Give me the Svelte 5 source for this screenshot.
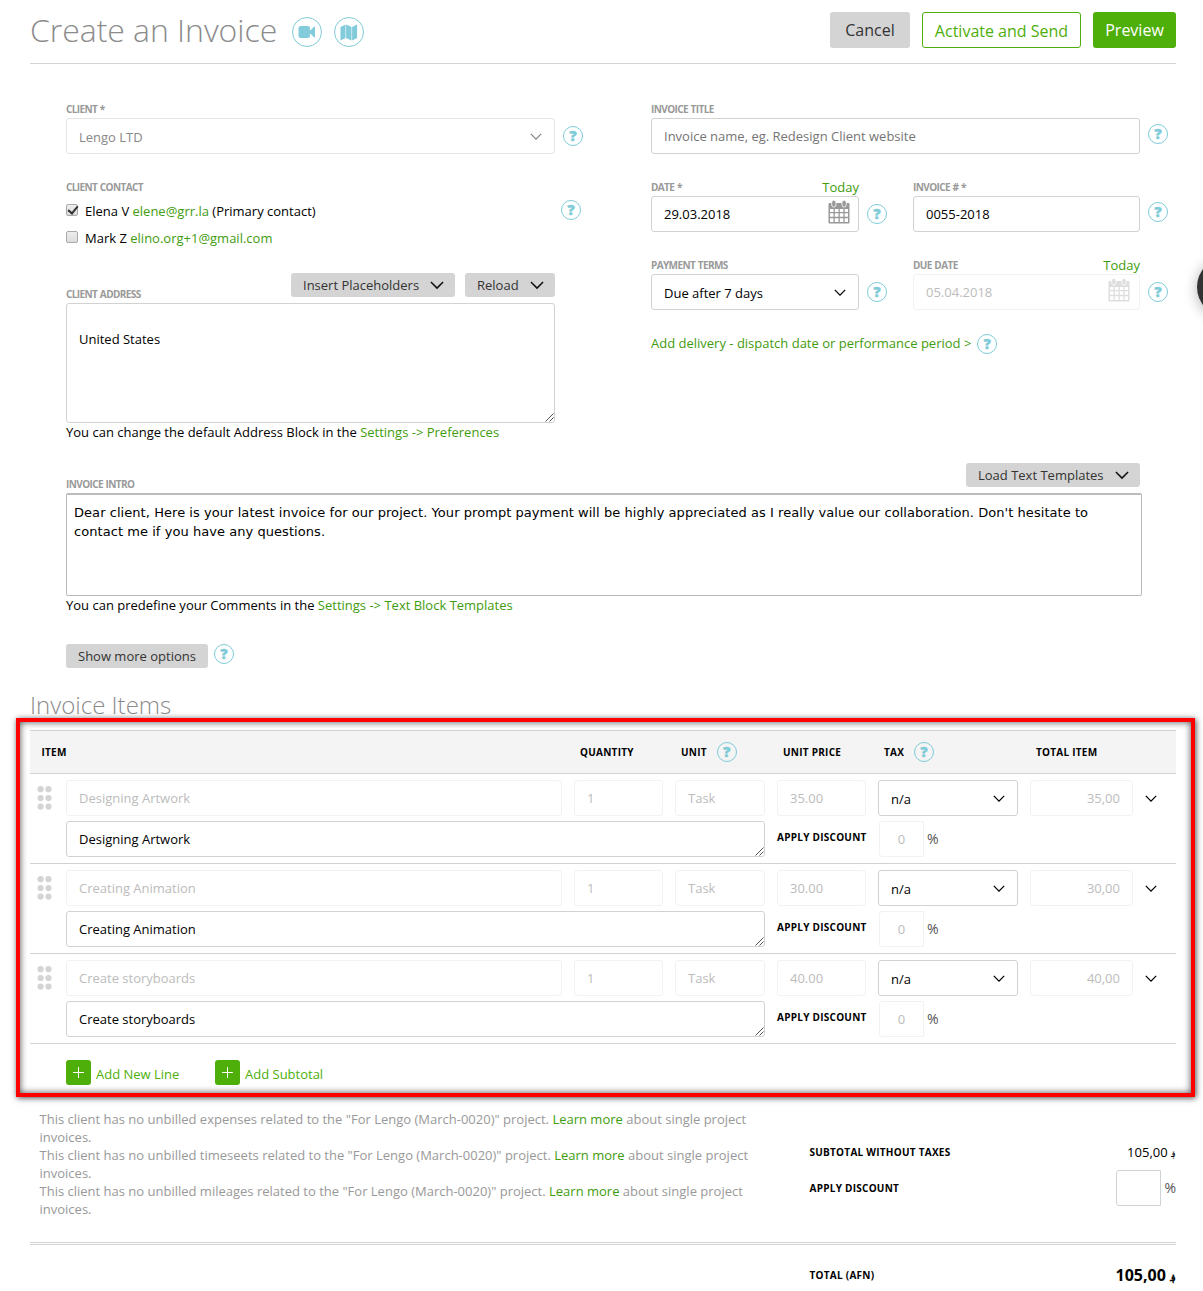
<script>
	let contacts = $state([
		{ name: 'Elena V', email: 'elene@grr.la', note: '(Primary contact)', checked: true },
		{ name: 'Mark Z', email: 'elino.org+1@gmail.com', note: '', checked: false }
	]);

	const items = [
		{ name: 'Designing Artwork', quantity: '1', unit: 'Task', price: '35.00', total: '35,00' },
		{ name: 'Creating Animation', quantity: '1', unit: 'Task', price: '30.00', total: '30,00' },
		{ name: 'Create storyboards', quantity: '1', unit: 'Task', price: '40.00', total: '40,00' }
	];

	const unbilled = ['expenses', 'timeseets', 'mileages'];
	const intro =
		"Dear client, Here is your latest invoice for our project. Your prompt payment will be highly appreciated as I really value our collaboration. Don't hesitate to contact me if you have any questions.";
</script>

{#snippet help()}
	<span class="help">?</span>
{/snippet}

{#snippet chevron(size = 12)}
	<svg class="chevron" width={size} height={size * 0.6} viewBox="0 0 12 7">
		<path d="M0.8 0.8 6 6 11.2 0.8" fill="none" stroke="currentColor" stroke-width="1.3" />
	</svg>
{/snippet}

{#snippet calendar()}
	<svg class="calendar" width="22" height="24" viewBox="0 0 22 24">
		<path
			fill-rule="evenodd"
			fill="currentColor"
			d="M1.500 3h19q1 0 1 1v18.500q0 1-1 1h-19q-1 0-1-1V4q0-1 1-1zM2 9v3h3.500V9zM6.800 9v3h3.700V9zM11.800 9v3h3.600V9zM16.700 9v3H20V9zM2 13.300v3.500h3.500v-3.500zM6.800 13.300v3.500h3.700v-3.500zM11.800 13.300v3.500h3.600v-3.500zM16.700 13.300v3.500H20v-3.500zM2 18.200V22h3.500v-3.800zM6.800 18.200V22h3.700v-3.800zM11.800 18.200V22h3.600v-3.800zM16.700 18.200V22H20v-3.800z"
		/>
		<rect x="3.700" y="0.300" width="4.200" height="6.700" rx="2" fill="currentColor" stroke="#fff" stroke-width="0.800" />
		<rect x="14" y="0.300" width="4.200" height="6.700" rx="2" fill="currentColor" stroke="#fff" stroke-width="0.800" />
	</svg>
{/snippet}

{#snippet grip()}
	<svg class="resize" width="9" height="9" viewBox="0 0 9 9">
		<path d="M0.500 8.500 8.500 0.500M4.500 8.500 8.500 4.500" stroke="#555" stroke-width="1" />
	</svg>
{/snippet}

<div class="page">
	<header>
		<h1>Create an Invoice</h1>
		<span class="round">
			<svg width="18" height="14" viewBox="0 0 18 14">
				<rect x="0.500" y="1" width="11.500" height="12" rx="2.200" fill="currentColor" />
				<path d="M11.500 6.200 16 1.700q1-.6 1 .4v9.800q0 1-1 .4L11.500 7.800z" fill="currentColor" />
			</svg>
		</span>
		<span class="round">
			<svg width="18" height="17" viewBox="0 0 18 17">
				<path d="M0.500 3 5.500 0.500V14L0.500 16.500zM6.100 0.500 11.500 3V16.500L6.100 14zM12.100 3 17.100 0.500V14L12.100 16.500z" fill="currentColor" />
			</svg>
		</span>
		<div class="actions">
			<button class="btn grey">Cancel</button>
			<button class="btn outline">Activate and Send</button>
			<button class="btn green">Preview</button>
		</div>
	</header>

	<div class="columns">
		<section class="left">
			<div class="label">Client *</div>
			<div class="line client">
				<div class="field muted">Lengo LTD {@render chevron()}</div>
				{@render help()}
			</div>

			<div class="label">Client contact</div>
			<div class="contacts">
				<div class="contact-list">
					{#each contacts as contact}
						<label class="contact">
							<input type="checkbox" bind:checked={contact.checked} />
							<span>{contact.name} <a href="#top">{contact.email}</a> {contact.note}</span>
						</label>
					{/each}
				</div>
				{@render help()}
			</div>

			<div class="label-row address-row">
				<div class="label">Client address</div>
				<button class="small placeholders">Insert Placeholders {@render chevron(14)}</button>
				<button class="small reload">Reload {@render chevron(14)}</button>
			</div>
			<div class="address">United States {@render grip()}</div>
			<p class="hint">You can change the default Address Block in the <a href="#top">Settings -&gt; Preferences</a></p>
		</section>

		<section class="right">
			<div class="label">Invoice title</div>
			<div class="line">
				<div class="field placeholder">Invoice name, eg. Redesign Client website</div>
				{@render help()}
			</div>

			<div class="pair">
				<div class="first">
					<div class="label-row"><div class="label">Date *</div><a href="#top">Today</a></div>
					<div class="line low">
						<div class="field">29.03.2018 {@render calendar()}</div>
						{@render help()}
					</div>
				</div>
				<div class="second">
					<div class="label">Invoice # *</div>
					<div class="line">
						<div class="field">0055-2018</div>
						{@render help()}
					</div>
				</div>
			</div>

			<div class="pair">
				<div class="first">
					<div class="label">Payment terms</div>
					<div class="line low">
						<div class="field select">Due after 7 days {@render chevron()}</div>
						{@render help()}
					</div>
				</div>
				<div class="second">
					<div class="label-row"><div class="label">Due date</div><a href="#top">Today</a></div>
					<div class="line low">
						<div class="field disabled">05.04.2018 {@render calendar()}</div>
						{@render help()}
					</div>
				</div>
			</div>
			<div class="delivery">
				<a href="#top">Add delivery - dispatch date or performance period &gt;</a>
				{@render help()}
			</div>
		</section>
	</div>

	<section class="intro">
		<div class="label-row">
			<div class="label">Invoice intro</div>
			<button class="small templates">Load Text Templates {@render chevron(14)}</button>
		</div>
		<div class="editor">{intro}</div>
		<p class="hint">You can predefine your Comments in the <a href="#top">Settings -&gt; Text Block Templates</a></p>
		<div class="more">
			<button class="small">Show more options</button>
			{@render help()}
		</div>
	</section>

	<h2>Invoice Items</h2>

	<section class="items">
		<div class="highlight"></div>
		<div class="head">
			<span>Item</span>
			<span>Quantity</span>
			<span>Unit {@render help()}</span>
			<span>Unit price</span>
			<span>Tax {@render help()}</span>
			<span>Total item</span>
		</div>
		{#each items as item}
			<div class="item">
				<svg class="drag" width="15" height="24" viewBox="0 0 15 24">
					{#each [3.2, 12, 20.600] as y}
						<circle cx="3.600" cy={y} r="3.100" />
						<circle cx="11.500" cy={y} r="3.100" />
					{/each}
				</svg>
				<div class="cells">
					<div class="field disabled">{item.name}</div>
					<div class="field disabled">{item.quantity}</div>
					<div class="field disabled">{item.unit}</div>
					<div class="field disabled">{item.price}</div>
					<div class="field select">n/a {@render chevron()}</div>
					<div class="field disabled total">{item.total}</div>
					{@render chevron()}
				</div>
				<div class="details">
					<div class="field description">{item.name} {@render grip()}</div>
					<span class="caption">Apply discount</span>
					<div class="field disabled percent">0</div>
					<span class="sign">%</span>
				</div>
			</div>
		{/each}
		<div class="add">
			<button class="add-line"><span class="plus"></span> Add New Line</button>
			<button class="add-line"><span class="plus"></span> Add Subtotal</button>
		</div>
	</section>

	<div class="summary">
		<div class="notes">
			{#each unbilled as kind}
				<p>
					This client has no unbilled {kind} related to the "For Lengo (March-0020)" project.
					<a href="#top">Learn more</a> about single project invoices.
				</p>
			{/each}
		</div>
		<div class="sums">
			<div class="sum">
				<span class="caption">Subtotal without taxes</span>
				<span class="amount">105,00 <i>؋</i></span>
			</div>
			<div class="sum discount">
				<span class="caption">Apply discount</span>
				<div class="field percent"></div>
				<span class="sign">%</span>
			</div>
		</div>
	</div>

	<div class="grand">
		<span class="caption">Total (AFN)</span>
		<strong>105,00 <i>؋</i></strong>
	</div>
</div>

<div class="bubble"></div>

<style>
	:global(html) {
		overflow: hidden;
	}

	:global(body) {
		background: #fff;
	}

	* {
		box-sizing: border-box;
	}

	.page {
		width: 1203px;
		height: 1291px;
		padding: 0 27px 0 30px;
		font-family: 'Open Sans', sans-serif;
		font-size: 13px;
		line-height: 18px;
		color: #000;
	}

	a {
		color: #3f9c0e;
		text-decoration: none;
	}

	p {
		margin: 0;
	}

	button {
		border: 0;
		padding: 0;
		font-family: inherit;
		border-radius: 3px;
	}

	header {
		display: flex;
		height: 64px;
		border-bottom: 1px solid #d4d4d4;
	}

	h1 {
		margin: 10px 15px 0 0;
		width: 247px;
		font-size: 32px;
		line-height: 40px;
		font-weight: 300;
		letter-spacing: -0.05px;
		color: #8c8c8c;
		white-space: nowrap;
	}

	.round {
		display: flex;
		align-items: center;
		justify-content: center;
		width: 30px;
		height: 30px;
		margin: 17px 12px 0 0;
		border: 1px solid #7fcbd8;
		border-radius: 50%;
		color: #82cbda;
	}

	.actions {
		display: flex;
		gap: 12px;
		margin: 12px 0 0 auto;
	}

	.btn {
		height: 36px;
		font-size: 16px;
	}

	.grey {
		width: 80px;
		background: #d4d4d4;
		color: #333;
	}

	.outline {
		width: 159px;
		padding-top: 2px;
		background: #fff;
		border: 1px solid #4eaf0a;
		color: #4eaf0a;
	}

	.green {
		width: 83px;
		background: #4eaf0a;
		color: #fff;
	}

	.columns {
		display: flex;
		gap: 68px;
		height: 399px;
		padding: 36px 0 0 36px;
	}

	.left,
	.right {
		flex: none;
		width: 517px;
	}

	.label {
		height: 18px;
		font-size: 10px;
		font-weight: 700;
		letter-spacing: -0.6px;
		line-height: 18px;
		color: #999;
		text-transform: uppercase;
		word-spacing: 0.6px;
	}

	.label-row {
		display: flex;
		justify-content: space-between;
		height: 18px;
	}

	.label-row a {
		line-height: 18px;
	}

	.line {
		display: flex;
		gap: 8px;
		height: 60px;
	}

	.line .help {
		margin-top: 6px;
	}

	.low .help,
	.client .help {
		margin-top: 8px;
	}

	.field {
		display: flex;
		align-items: center;
		justify-content: space-between;
		flex: 1;
		height: 36px;
		padding: 0 12px;
		border: 1px solid #d2d2d2;
		border-radius: 3px;
		background: #fff;
	}

	.muted {
		border-color: #e4e4e4;
		color: #888;
		padding-top: 2px;
	}

	.placeholder {
		color: #757575;
	}

	.select {
		padding-top: 2px;
	}

	.select .chevron,
	.muted .chevron {
		margin-top: -1px;
	}

	.disabled {
		border-color: #f2f2f2;
		color: #bcbcbc;
	}

	.calendar {
		margin: -4px -4px 0 0;
		color: #999;
	}

	.disabled .calendar {
		margin-right: -3px;
		color: #dedede;
	}

	.help {
		display: inline-flex;
		flex: none;
		align-items: center;
		justify-content: center;
		width: 20px;
		height: 20px;
		border: 1px solid #7fcbd8;
		border-radius: 50%;
		font-size: 14px;
		font-weight: 800;
		letter-spacing: 0;
		line-height: 18px;
		color: #7fcbd8;
		-webkit-text-stroke: 0.5px #7fcbd8;
	}

	.contacts {
		display: flex;
		height: 77px;
		justify-content: space-between;
		padding: 3px 2px 0 0;
	}

	.contacts .help {
		margin: 1px 0 0;
	}

	.contact {
		display: flex;
		height: 27px;
		line-height: 24px;
	}

	.contact input {
		appearance: none;
		width: 12px;
		height: 12px;
		margin: 5px 7px 0 0;
		border: 1px solid #aaa;
		border-radius: 2px;
		background: linear-gradient(#eee, #dcdcdc);
	}

	.contact input:checked::after {
		content: '';
		display: block;
		width: 4px;
		height: 8px;
		margin: -1px 0 0 3px;
		border: solid #333;
		border-width: 0 2px 2px 0;
		transform: rotate(40deg);
	}

	.address-row {
		height: 30px;
		gap: 10px;
		width: 489px;
	}

	.address-row .label {
		margin: 12px auto 0 0;
	}

	.small {
		display: flex;
		align-items: center;
		justify-content: space-between;
		height: 24px;
		padding: 0 11px 0 12px;
		background: #d4d4d4;
		font-size: 13px;
		line-height: 18px;
		color: #333;
	}

	.small .chevron {
		margin-top: 1px;
		color: #111;
	}

	.placeholders {
		width: 164px;
	}

	.reload {
		width: 90px;
	}

	.address {
		position: relative;
		width: 489px;
		height: 120px;
		padding: 26px 12px;
		border: 1px solid #d2d2d2;
		border-radius: 3px;
	}

	.resize {
		position: absolute;
		right: 0;
		bottom: 0;
	}

	.pair {
		display: flex;
		gap: 26px;
	}

	.first {
		width: 236px;
	}

	.second {
		width: 255px;
	}

	.first .label-row,
	.second .label-row {
		padding-right: 28px;
	}

	.delivery {
		display: flex;
		gap: 6px;
		line-height: 19px;
	}

	.intro {
		height: 228px;
		padding-left: 36px;
	}

	.intro .label-row {
		width: 1074px;
		height: 30px;
	}

	.intro .label {
		margin-top: 12px;
	}

	.templates {
		width: 174px;
	}

	.editor {
		width: 1076px;
		height: 103px;
		padding: 8px 40px 8px 7px;
		border: 1px solid #bbb;
		border-top-width: 2px;
		border-radius: 2px;
		font-family: 'DejaVu Sans', sans-serif;
		letter-spacing: 0.055px;
		line-height: 19px;
	}

	.more {
		display: flex;
		gap: 6px;
		margin-top: 30px;
	}

	.more .small {
		width: 142px;
	}

	h2 {
		height: 39px;
		margin: 0;
		font-size: 24px;
		font-weight: 300;
		line-height: 27px;
		color: #8c8c8c;
	}

	.items {
		position: relative;
		height: 368px;
	}

	/* red frame around the line items */
	.highlight {
		position: absolute;
		inset: -12px -19px auto -14px;
		height: 379px;
		border: 4px solid #f00;
		box-shadow: 1px 1px 6px rgba(0, 0, 0, 0.7), inset 0 0 7px rgba(0, 0, 0, 0.7);
		pointer-events: none;
	}

	.head {
		display: grid;
		grid-template-columns: 538.5px 101px 102px 101px 152px auto;
		align-items: center;
		height: 44px;
		padding-left: 11.5px;
		border: solid #d2d2d2;
		border-width: 1px 0;
		background: #f4f4f4;
	}

	.head span:not(.help) {
		display: flex;
		align-items: center;
	}

	.head .help {
		margin-left: 10px;
	}

	.head,
	.caption {
		font-size: 10px;
		font-weight: 700;
		letter-spacing: 0.26px;
		text-transform: uppercase;
	}

	.item {
		position: relative;
		height: 90px;
		padding: 6px 0 0 36px;
		border-bottom: 1px solid #d2d2d2;
	}

	.drag {
		position: absolute;
		top: 12px;
		left: 7px;
		fill: #d4d4d4;
	}

	.cells {
		display: grid;
		grid-template-columns: 496px 89px 90px 89px 140px 103px auto;
		gap: 12px;
		align-items: center;
	}

	.cells > .chevron {
		margin-top: 2px;
	}

	.total {
		justify-content: flex-end;
	}

	.details {
		display: flex;
		margin-top: 5px;
	}

	.description {
		position: relative;
		flex: none;
		width: 699px;
		margin-right: 12px;
	}

	.details .caption {
		width: 102px;
		line-height: 33px;
	}

	.percent {
		flex: none;
		width: 45px;
		justify-content: center;
		border-radius: 3px 0 0 3px;
	}

	.sign {
		margin-left: 3px;
		font-size: 14px;
		line-height: 36px;
		color: #555;
	}

	.add {
		display: flex;
		padding: 16px 0 0 36px;
	}

	.add-line {
		display: flex;
		width: 149px;
		gap: 5px;
		background: none;
		font-size: 13px;
		line-height: 28px;
		color: #4eaf0a;
	}

	.plus {
		width: 25px;
		height: 25px;
		border-radius: 3px;
		background: linear-gradient(#fff, #fff) 7px 12px / 11px 1px no-repeat,
			linear-gradient(#fff, #fff) 12px 7px / 1px 11px no-repeat, #4eaf0a;
	}

	.summary {
		display: flex;
		height: 147px;
		padding: 12px 0 0 9.5px;
		border-bottom: 3px double #d2d2d2;
	}

	.notes {
		width: 720px;
		color: #999;
	}

	.sums {
		flex: 1;
		padding: 24px 0 0 50px;
	}

	.sum {
		display: flex;
		align-items: center;
		height: 36px;
	}

	.sum .caption,
	.grand .caption {
		margin-right: auto;
	}

	.amount {
		padding-top: 1px;
		letter-spacing: -0.15px;
	}

	i {
		font-style: normal;
		font-size: 0.65em;
	}

	.grand {
		display: flex;
		align-items: center;
		height: 46px;
		padding: 14px 0 0 779.5px;
	}

	.grand strong {
		padding-top: 1px;
		font-size: 16px;
		letter-spacing: -0.7px;
	}

	.bubble {
		position: fixed;
		top: 257px;
		left: 1197px;
		width: 60px;
		height: 60px;
		border-radius: 50%;
		background: #333;
		box-shadow: 0 2px 14px rgba(0, 0, 0, 0.3);
	}
</style>
